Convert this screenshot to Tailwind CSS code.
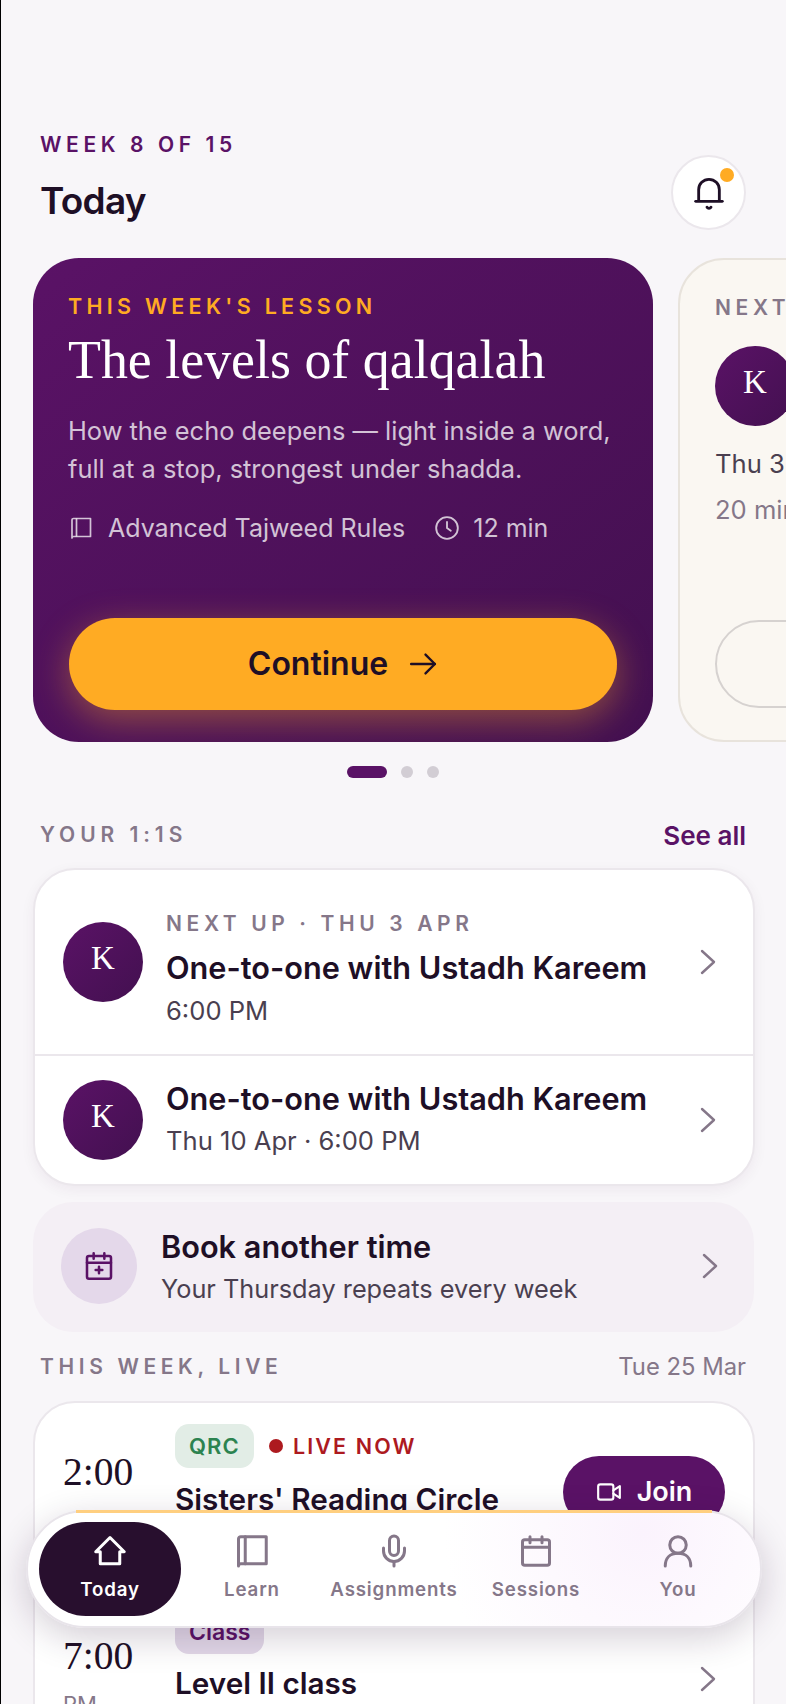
<!DOCTYPE html>
<html lang="en">
<head>
    <meta charset="utf-8">
    <meta name="viewport" content="width=device-width, initial-scale=1">
    <title>Today</title>
    <script src="https://cdn.jsdelivr.net/npm/@tailwindcss/browser@4"></script>
</head>
<body class="bg-[#f8f6f9]">
<div class="relative w-[786px] h-[1704px] overflow-hidden border-l border-black bg-[#f8f6f9] font-['Inter',sans-serif] text-[#1e0f26]">

    <!-- header -->
    <div class="flex justify-between items-start pt-[133px] pl-[39px] pr-[40px] h-[258px]">
        <div>
            <p class="text-[21px] leading-[23px] font-semibold tracking-[0.22em] text-[#5a1266]">WEEK 8 OF 15</p>
            <h1 class="mt-[22px] text-[37px] leading-[46px] font-semibold tracking-[-0.02em]">Today</h1>
        </div>
        <button class="relative mt-[22px] w-[75px] h-[75px] rounded-full bg-white border-2 border-[#ebe7ec] flex items-center justify-center">
            <svg class="w-[40px] h-[40px]" viewBox="0 0 24 24" fill="none" stroke="#1e0f26" stroke-width="1.7" stroke-linecap="round" stroke-linejoin="round"><path d="M5.8 16.500V10a6.200 6.200 0 0 1 12.400 0v6.500"/><path d="M4 17h16"/><path d="M10.800 20.500a1.400 1.400 0 0 0 2.400 0"/></svg>
            <span class="absolute top-[11px] right-[10px] w-[14px] h-[14px] rounded-full bg-[#ffab23]"></span>
        </button>
    </div>

    <!-- carousel -->
    <div class="flex gap-[25px] pl-[32px] h-[484px]">
        <div class="shrink-0 w-[620px] h-[484px] rounded-[46px] overflow-hidden bg-gradient-to-br from-[#5a1266] to-[#431050] pl-[35px] pt-[36px]">
            <p class="text-[21.5px] leading-[24px] font-semibold tracking-[0.2em] text-[#ffab23]">THIS WEEK'S LESSON</p>
            <h2 class="mt-[10px] font-['Liberation_Serif',serif] text-[53.900px] leading-[64px] text-white">The levels of qalqalah</h2>
            <p class="mt-[20px] pr-[36px] text-[25.4px] leading-[37.5px] text-white/75">How the echo deepens — light inside a word, full at a stop, strongest under shadda.</p>
            <div class="mt-[22px] ml-[1px] flex items-center text-[25px] leading-[38px] text-white/75">
                <svg class="w-[24px] h-[24px] mr-[15px]" viewBox="0 0 24 24" fill="none" stroke="currentColor" stroke-width="1.7" stroke-linejoin="round"><path d="M3 22V4a1.500 1.500 0 0 1 1.500-1.500H21.500V20.500H4.500A1.500 1.500 0 0 0 3 22Z"/><path d="M7.500 2.500V20.500"/></svg>
                <span>Advanced Tajweed Rules</span>
                <svg class="w-[26px] h-[26px] ml-[29px] mr-[13px]" viewBox="0 0 24 24" fill="none" stroke="currentColor" stroke-width="1.7" stroke-linecap="round" stroke-linejoin="round"><circle cx="12" cy="12" r="10"/><path d="M12 6.500V12l3.500 2.500"/></svg>
                <span>12 min</span>
            </div>
            <button class="mt-[71px] ml-[1px] w-[548px] h-[92px] rounded-full bg-[#ffab23] flex items-center justify-center gap-[20px] text-[32px] font-semibold shadow-[0_10px_36px_rgba(255,171,35,0.4)]">
                Continue
                <svg class="w-[30px] h-[30px]" viewBox="0 0 24 24" fill="none" stroke="#1e0f26" stroke-width="1.9" stroke-linecap="round" stroke-linejoin="round"><path d="M2.500 12h19"/><path d="M14 4.500l7.500 7.500-7.500 7.500"/></svg>
            </button>
        </div>
        <div class="shrink-0 w-[620px] h-[484px] rounded-[46px] bg-[#faf7f2] border-2 border-[#e8e3dc] pl-[35px] pt-[36px]">
            <p class="text-[21px] leading-[24px] font-semibold tracking-[0.22em] text-[#857789]">NEXT UP</p>
            <div class="mt-[26px] w-[80px] h-[80px] rounded-full bg-gradient-to-br from-[#5a1266] to-[#431050] flex items-center justify-center pb-[6px] font-['Liberation_Serif',serif] text-[33px] text-white">K</div>
            <p class="mt-[19px] text-[25.6px] leading-[38px] text-[#4a3f50]">Thu 3 Apr · 6:00 PM</p>
            <p class="mt-[8px] text-[25.6px] leading-[38px] text-[#857789]">20 min</p>
            <div class="mt-[91px] w-[548px] h-[88px] rounded-full border-2 border-[#d6d2d0]"></div>
        </div>
    </div>

    <!-- dots -->
    <div class="flex justify-center gap-[14px] mt-[24px] pr-[2px]">
        <span class="w-[40px] h-[12px] rounded-full bg-[#5a1266]"></span>
        <span class="w-[12px] h-[12px] rounded-full bg-[#d2cdd4]"></span>
        <span class="w-[12px] h-[12px] rounded-full bg-[#d2cdd4]"></span>
    </div>

    <!-- 1:1s -->
    <div class="flex justify-between items-center mt-[45px] pl-[39px] pr-[40px] h-[24px]">
        <p class="text-[21px] font-semibold tracking-[0.235em] text-[#857789]">YOUR 1:1S</p>
        <p class="text-[26px] font-semibold text-[#5a1266]">See all</p>
    </div>
    <div class="ml-[32px] mr-[31px] mt-[21px] h-[318px] rounded-[42px] bg-white border-2 border-[#ebe7ec] shadow-[0_4px_14px_rgba(60,20,70,0.06)] overflow-hidden">
        <div class="flex items-center h-[186px] pl-[28px] pr-[37px] border-b-2 border-[#ebe7ec]">
            <div class="shrink-0 w-[80px] h-[80px] rounded-full bg-gradient-to-br from-[#5a1266] to-[#431050] flex items-center justify-center pb-[6px] font-['Liberation_Serif',serif] text-[33px] text-white">K</div>
            <div class="ml-[23px] flex-1 pt-[17px]">
                <p class="text-[21px] leading-[24px] font-semibold tracking-[0.22em] text-[#857789]">NEXT UP · THU 3 APR</p>
                <p class="mt-[11px] text-[30.7px] leading-[42px] font-semibold">One-to-one with Ustadh Kareem</p>
                <p class="mt-[4px] text-[25.6px] leading-[36px] text-[#4a3f50]">6:00 PM</p>
            </div>
            <svg class="w-[16px] h-[26px]" viewBox="0 0 16 26" fill="none" stroke="#857789" stroke-width="2.4" stroke-linecap="round" stroke-linejoin="round"><path d="M2 2l12 11L2 24"/></svg>
        </div>
        <div class="flex items-center h-[128px] pl-[28px] pr-[37px]">
            <div class="shrink-0 w-[80px] h-[80px] rounded-full bg-gradient-to-br from-[#5a1266] to-[#431050] flex items-center justify-center pb-[6px] font-['Liberation_Serif',serif] text-[33px] text-white">K</div>
            <div class="ml-[23px] flex-1 pb-[3px]">
                <p class="text-[30.7px] leading-[42px] font-semibold">One-to-one with Ustadh Kareem</p>
                <p class="mt-[3px] text-[25.6px] leading-[36px] text-[#4a3f50]">Thu 10 Apr · 6:00 PM</p>
            </div>
            <svg class="w-[16px] h-[26px]" viewBox="0 0 16 26" fill="none" stroke="#857789" stroke-width="2.4" stroke-linecap="round" stroke-linejoin="round"><path d="M2 2l12 11L2 24"/></svg>
        </div>
    </div>

    <!-- book -->
    <div class="flex items-center mx-[32px] mt-[16px] h-[130px] rounded-[40px] bg-[#f4eff5] pl-[28px] pr-[36px] pb-[2px]">
        <div class="shrink-0 w-[76px] h-[76px] rounded-full bg-[#e4d8ea] flex items-center justify-center">
            <svg class="w-[32px] h-[32px]" viewBox="0 0 24 24" fill="none" stroke="#5a1266" stroke-width="1.9" stroke-linecap="round" stroke-linejoin="round"><rect x="3" y="4.500" width="18" height="17" rx="1.500"/><path d="M3 9.500h18"/><path d="M8 2.500v4M16 2.500v4"/><path d="M12 12.500v5M9.500 15h5"/></svg>
        </div>
        <div class="ml-[24px] flex-1">
            <p class="text-[30.7px] leading-[42px] font-semibold">Book another time</p>
            <p class="mt-[3px] text-[25.3px] leading-[36px] text-[#4a3f50]">Your Thursday repeats every week</p>
        </div>
        <svg class="w-[16px] h-[26px]" viewBox="0 0 16 26" fill="none" stroke="#857789" stroke-width="2.4" stroke-linecap="round" stroke-linejoin="round"><path d="M2 2l12 11L2 24"/></svg>
    </div>

    <!-- this week -->
    <div class="flex justify-between items-center mt-[23px] pl-[39px] pr-[40px] h-[24px]">
        <p class="text-[21px] font-semibold tracking-[0.22em] text-[#857789]">THIS WEEK, LIVE</p>
        <p class="text-[23.8px] text-[#857789]">Tue 25 Mar</p>
    </div>
    <div class="ml-[32px] mr-[31px] mt-[22px] h-[400px] rounded-[42px] bg-white border-2 border-[#ebe7ec] overflow-hidden">
        <div class="flex h-[184px] pl-[28px] pr-[28px]">
            <div class="w-[112px] mt-[47px]">
                <p class="font-['Liberation_Serif',serif] text-[39.500px] leading-[44px]">2:00</p>
                <p class="mt-[14px] text-[22px] leading-[30px] text-[#857789]">PM</p>
            </div>
            <div class="flex-1 pt-[21px]">
                <div class="flex items-center">
                    <span class="px-[14px] h-[44px] flex items-center rounded-[14px] bg-[#e2ede6] text-[22px] font-semibold tracking-[0.05em] text-[#2c8350]">QRC</span>
                    <span class="ml-[15px] w-[14px] h-[14px] rounded-full bg-[#ad1a1f]"></span>
                    <span class="ml-[10px] text-[21.5px] font-semibold tracking-[0.1em] text-[#ad1a1f]">LIVE NOW</span>
                </div>
                <p class="mt-[10px] text-[29.700px] leading-[42px] font-semibold">Sisters' Reading Circle</p>
            </div>
            <button class="mt-[53px] w-[162px] h-[72px] rounded-full bg-[#5a1266] flex items-center justify-center gap-[15px] text-white text-[27px] font-semibold">
                <svg class="w-[26px] h-[26px]" viewBox="0 0 24 24" fill="none" stroke="white" stroke-width="2" stroke-linecap="round" stroke-linejoin="round"><rect x="2" y="5" width="14" height="14" rx="2"/><path d="M16 10.500l6-4v11l-6-4"/></svg>
                Join
            </button>
        </div>
        <div class="flex items-center h-[184px] pl-[28px] pr-[37px]">
            <div class="w-[112px] self-start mt-[47px]">
                <p class="font-['Liberation_Serif',serif] text-[39.500px] leading-[44px]">7:00</p>
                <p class="mt-[11px] text-[22px] leading-[30px] text-[#857789]">PM</p>
            </div>
            <div class="flex-1 self-start pt-[23px]">
                <span class="inline-flex px-[14px] h-[44px] items-center rounded-[14px] bg-[#e2d8e8] text-[23px] font-semibold text-[#5a1266]">Class</span>
                <p class="mt-[8px] text-[29.700px] leading-[42px] font-semibold">Level II class</p>
            </div>
            <svg class="w-[16px] h-[26px]" viewBox="0 0 16 26" fill="none" stroke="#857789" stroke-width="2.4" stroke-linecap="round" stroke-linejoin="round"><path d="M2 2l12 11L2 24"/></svg>
        </div>
    </div>

    <!-- bottom nav -->
    <nav class="absolute left-[25px] top-[1510px] w-[736px] h-[118px] rounded-full border-2 border-[#e8e4ea] bg-[radial-gradient(circle_at_84%_18%,#fbf3fd_0%,#ffffff_32%)] shadow-[0_10px_36px_rgba(40,15,50,0.2)] grid grid-cols-5 px-[11px] py-[10px] text-[18.700px] font-semibold tracking-[0.045em] text-[#857789]">
        <span class="absolute -top-[2px] left-[48px] right-[48px] h-[3px] bg-[#ffcf80]"></span>
        <a class="rounded-full bg-[#280f2e] text-white flex flex-col items-center justify-center gap-[7px]">
            <svg class="w-[36px] h-[36px]" viewBox="0 0 24 24" fill="none" stroke="currentColor" stroke-width="2" stroke-linecap="round" stroke-linejoin="round"><path d="M2.500 12.500 12 3l9.500 9.500H18.500V20.500H5.500V12.500Z"/></svg>
            Today
        </a>
        <a class="flex flex-col items-center justify-center gap-[7px]">
            <svg class="w-[36px] h-[36px]" viewBox="0 0 24 24" fill="none" stroke="currentColor" stroke-width="2" stroke-linecap="round" stroke-linejoin="round"><path d="M3 22V4a1.500 1.500 0 0 1 1.500-1.500H21.500V20.500H4.500A1.500 1.500 0 0 0 3 22Z"/><path d="M7.500 2.500V20.500"/></svg>
            Learn
        </a>
        <a class="flex flex-col items-center justify-center gap-[7px]">
            <svg class="w-[36px] h-[36px]" viewBox="0 0 24 24" fill="none" stroke="currentColor" stroke-width="2" stroke-linecap="round" stroke-linejoin="round"><path d="M12 2a3 3 0 0 0-3 3v7a3 3 0 0 0 6 0V5a3 3 0 0 0-3-3Z"/><path d="M19 10v2a7 7 0 0 1-14 0v-2"/><path d="M12 19v3"/></svg>
            Assignments
        </a>
        <a class="flex flex-col items-center justify-center gap-[7px]">
            <svg class="w-[36px] h-[36px]" viewBox="0 0 24 24" fill="none" stroke="currentColor" stroke-width="2" stroke-linecap="round" stroke-linejoin="round"><rect x="3" y="4.500" width="18" height="17" rx="1.500"/><path d="M3 9.500h18"/><path d="M8 2.500v4M16 2.500v4"/></svg>
            Sessions
        </a>
        <a class="flex flex-col items-center justify-center gap-[7px]">
            <svg class="w-[36px] h-[36px]" viewBox="0 0 24 24" fill="none" stroke="currentColor" stroke-width="2" stroke-linecap="round" stroke-linejoin="round"><circle cx="12" cy="8" r="5.500"/><path d="M3.500 22c0-5 3-8.500 8.500-8.500s8.500 3.500 8.500 8.500"/></svg>
            You
        </a>
    </nav>
</div>
</body>
</html>
